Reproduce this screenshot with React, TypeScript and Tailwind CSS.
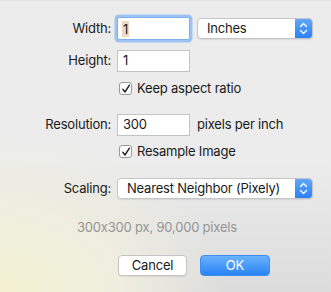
import React from "react";

const font = { fontFamily: "Inter, 'Liberation Sans', sans-serif" };

function Chevrons() {
  return (
    <svg width="9" height="13" viewBox="0 0 9 13" fill="none">
      <path d="M1.5 4.5 L4.5 1.5 L7.5 4.5" stroke="white" strokeWidth="1.4" strokeLinecap="round" strokeLinejoin="round" />
      <path d="M1.5 8.5 L4.5 11.5 L7.5 8.5" stroke="white" strokeWidth="1.4" strokeLinecap="round" strokeLinejoin="round" />
    </svg>
  );
}

function Popup({ text, w }: { text: string; w: string }) {
  return (
    <div className={`${w} h-[21px] flex items-stretch rounded-[4px] border border-[#c5c5c5] bg-white shadow-[0_1px_1px_rgba(0,0,0,0.08)] overflow-hidden`}>
      <div className="flex-1 flex items-center pl-[9px] text-[13px] text-[#1a1a1a]">{text}</div>
      <div className="w-[17px] flex items-center justify-center bg-[linear-gradient(#5fa8fb,#2a80f6)]">
        <Chevrons />
      </div>
    </div>
  );
}

function Check({ label }: { label: string }) {
  return (
    <div className="flex items-center h-[13px]">
      <div className="w-[13px] h-[13px] rounded-[3px] border border-[#9a9a9a] bg-white flex items-center justify-center">
        <svg width="10" height="10" viewBox="0 0 10 10" fill="none">
          <path d="M1.8 5.2 L4 8 L8.4 1.2" stroke="#222" strokeWidth="1.4" strokeLinecap="round" strokeLinejoin="round" />
        </svg>
      </div>
      <span className="ml-[5px] text-[13px] text-[#1a1a1a]">{label}</span>
    </div>
  );
}

function Label({ text }: { text: string }) {
  return <div className="w-[111px] text-right text-[13px] text-[#1a1a1a]">{text}</div>;
}

export default function App() {
  return (
    <div
      style={font}
      className="relative w-[331px] h-[292px] overflow-hidden tracking-[-0.2px] [font-variant-ligatures:no-contextual] bg-[radial-gradient(ellipse_90%_70%_at_0%_100%,#f2f0cf_0%,#efeedf_40%,rgba(236,236,236,0)_75%),linear-gradient(to_bottom,#ececec_0%,#ececec_55%,#dcdcdc_100%)]"
    >
      <div className="h-px bg-[#e2e2e2]" />
      <div className="flex flex-col pt-[16px]">
        {/* Width */}
        <div className="flex items-center h-[23px]">
          <Label text="Width:" />
          <div className="ml-[6px] w-[73px] h-[23px] rounded-[2px] bg-white border border-[#7fb0ee] shadow-[0_0_0_2.5px_#9cc3f3] flex items-center pl-[4px]">
            <span className="text-[13px] text-[#1a1a1a] bg-[#ead9c5] px-[1px] leading-[16px]">1</span>
          </div>
          <div className="ml-[7px]">
            <Popup text="Inches" w="w-[116px]" />
          </div>
        </div>
        {/* Height */}
        <div className="flex items-center h-[22px] mt-[10px]">
          <Label text="Height:" />
          <div className="ml-[6px] w-[73px] h-[22px] bg-white border border-[#c3c3c3] flex items-center pl-[5px] text-[13px] text-[#1a1a1a]">1</div>
        </div>
        <div className="flex mt-[10px] pl-[119px]">
          <Check label="Keep aspect ratio" />
        </div>
        {/* Resolution */}
        <div className="flex items-center h-[22px] mt-[19px]">
          <Label text="Resolution:" />
          <div className="ml-[6px] w-[73px] h-[22px] bg-white border border-[#c3c3c3] flex items-center pl-[5px] text-[13px] text-[#1a1a1a]">300</div>
          <span className="ml-[7px] text-[13px] text-[#1a1a1a]">pixels per inch</span>
        </div>
        <div className="flex mt-[9px] pl-[119px]">
          <Check label="Resample Image" />
        </div>
        {/* Scaling */}
        <div className="flex items-center h-[21px] mt-[20px]">
          <Label text="Scaling:" />
          <div className="ml-[6px]">
            <Popup text="Nearest Neighbor (Pixely)" w="w-[196px]" />
          </div>
        </div>
        <div className="mt-[20px] pl-[77px] text-[13px] text-[#959595] h-[16px] leading-[16px]">
          300x300 px, 90,000 pixels
        </div>
        <div className="flex mt-[20px] pl-[118px] gap-[13px]">
          <div className="w-[69px] h-[21px] rounded-[4px] bg-white border border-[#c5c5c5] shadow-[0_1px_1px_rgba(0,0,0,0.08)] flex items-center justify-center text-[13px] text-[#1a1a1a]">
            Cancel
          </div>
          <div className="w-[70px] h-[21px] rounded-[4px] bg-[linear-gradient(#6ab2fb,#2a83f6)] border border-[#3e8ef2] flex items-center justify-center text-[13px] text-white">
            OK
          </div>
        </div>
      </div>
    </div>
  );
}
